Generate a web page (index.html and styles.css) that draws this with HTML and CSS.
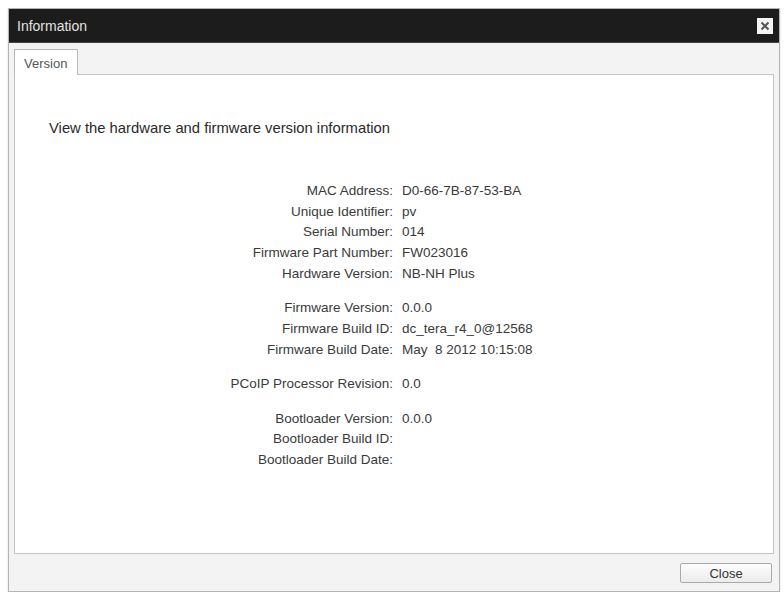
FILE: index.html
```html
<!DOCTYPE html>
<html>
<head>
<meta charset="utf-8">
<link rel="stylesheet" href="styles.css">
</head>
<body>
<div class="dialog">
  <div class="titlebar">
    <span class="title">Information</span>
    <span class="close-x">
      <svg width="10" height="10" viewBox="0 0 10 10"><path d="M1.5 1.5 L8.5 8.5 M8.5 1.5 L1.5 8.5" stroke="#555" stroke-width="2"/></svg>
    </span>
  </div>
  <div class="body">
    <div class="tabs"><div class="tab">Version</div></div>
    <div class="panel">
      <p class="heading">View the hardware and firmware version information</p>
      <div class="group">
        <div class="label">MAC Address:</div><div class="value">D0-66-7B-87-53-BA</div>
        <div class="label">Unique Identifier:</div><div class="value">pv</div>
        <div class="label">Serial Number:</div><div class="value">014</div>
        <div class="label">Firmware Part Number:</div><div class="value">FW023016</div>
        <div class="label">Hardware Version:</div><div class="value">NB-NH Plus</div>
      </div>
      <div class="group">
        <div class="label">Firmware Version:</div><div class="value">0.0.0</div>
        <div class="label">Firmware Build ID:</div><div class="value">dc_tera_r4_0@12568</div>
        <div class="label">Firmware Build Date:</div><div class="value">May&nbsp; 8 2012 10:15:08</div>
      </div>
      <div class="group">
        <div class="label">PCoIP Processor Revision:</div><div class="value">0.0</div>
      </div>
      <div class="group">
        <div class="label">Bootloader Version:</div><div class="value">0.0.0</div>
        <div class="label">Bootloader Build ID:</div><div class="value"></div>
        <div class="label">Bootloader Build Date:</div><div class="value"></div>
      </div>
    </div>
    <div class="footer">
      <button class="btn">Close</button>
    </div>
  </div>
</div>
</body>
</html>
```
FILE: styles.css
```css
html, body {
  margin: 0;
  padding: 0;
  background: #ffffff;
}
body {
  font-family: "Liberation Sans", Arial, sans-serif;
  color: #333;
}
.dialog {
  margin: 8px 0 0 8px;
  width: 770px;
  height: 582px;
  border: 1px solid #b4b4b4;
  background: #f3f3f3;
  display: flex;
  flex-direction: column;
  box-shadow: 0 1px 2px rgba(0,0,0,0.15);
}
.titlebar {
  height: 34px;
  background: #1c1c1c;
  border-bottom: 1px solid #444;
  box-sizing: border-box;
  display: flex;
  align-items: center;
  justify-content: space-between;
  padding: 0 6px 0 8px;
}
.title {
  color: #e2e2e2;
  font-size: 14px;
}
.close-x {
  width: 16px;
  height: 16px;
  background: #f4f4f4;
  display: flex;
  align-items: center;
  justify-content: center;
  margin-top: 1px;
}
.close-x svg { display: block; }
.body {
  flex: 1;
  display: flex;
  flex-direction: column;
  padding: 6px 5px 0 5px;
}
.tabs {
  display: flex;
  height: 26px;
  position: relative;
  z-index: 1;
  margin-bottom: -1px;
}
.tab {
  width: 64px;
  height: 26px;
  box-sizing: border-box;
  background: #fff;
  border: 1px solid #b9b9b9;
  border-bottom: none;
  font-size: 13px;
  color: #555;
  padding: 6px 0 0 9px;
}
.panel {
  flex: 1;
  background: #fff;
  border: 1px solid #c4c4c4;
  padding: 43px 0 0 34px;
}
.heading {
  margin: 0 0 43px 0;
  font-size: 14.8px;
  line-height: 20px;
  color: #2a2a2a;
}
.group {
  display: grid;
  grid-template-columns: 344px 1fr;
  column-gap: 9px;
  margin-bottom: 13.8px;
  font-size: 13.5px;
  line-height: 20.7px;
}
.label {
  text-align: right;
  color: #3a3a3a;
}
.value {
  color: #3a3a3a;
}
.footer {
  height: 37px;
  display: flex;
  align-items: center;
  justify-content: flex-end;
  padding-right: 2px;
}
.btn {
  width: 92px;
  height: 20px;
  font-family: "Liberation Sans", Arial, sans-serif;
  font-size: 13px;
  color: #333;
  background: linear-gradient(#fdfdfd, #ececec);
  border: 1px solid #a9a9a9;
  border-radius: 2px;
  padding: 0;
  margin-top: 1px;
}
```
